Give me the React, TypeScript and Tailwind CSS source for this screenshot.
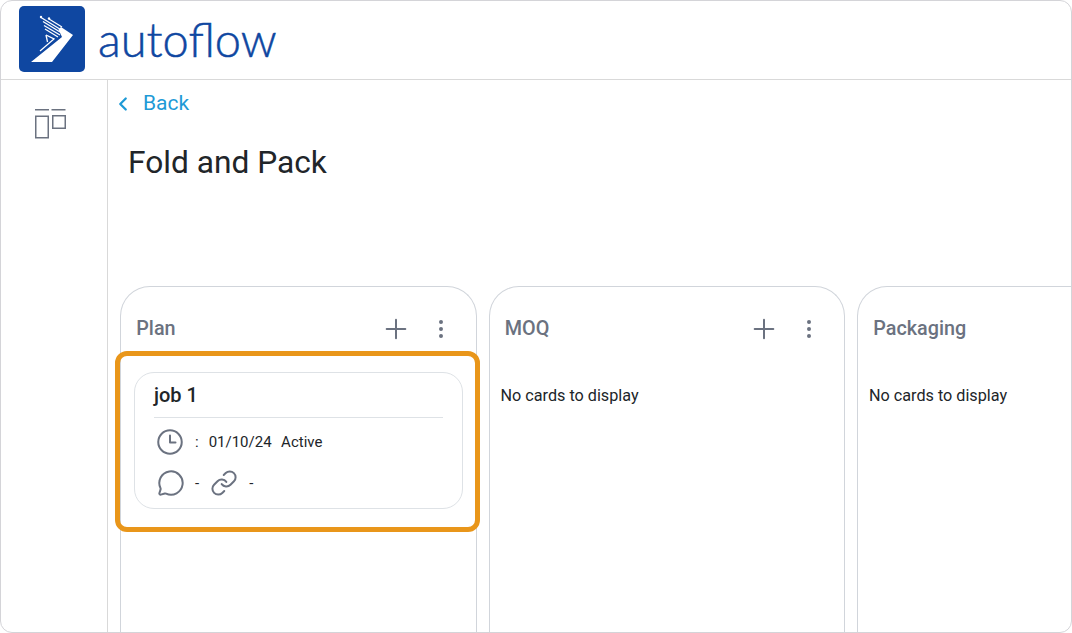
import { ChevronLeft, EllipsisVertical, Link, MessageCircle, Plus } from "lucide-react";

function Logo() {
    return (
        <svg width="66" height="66" viewBox="19 6 66 66" className="shrink-0">
            <rect x="19" y="6" width="66" height="66" rx="5" fill="#0f47a1" />
            <path d="M31 62 L52 62 L73 35 L61 27 L58.5 29.5 L62 37 Z" fill="#fff" />
            <g stroke="#fff" strokeWidth="1.3" fill="none">
                <path d="M41 17.5 L63 31" />
                <path d="M49 19 L62 27" />
                <path d="M43 21.5 L60 32" />
                <path d="M44 25.5 L60 35" />
                <path d="M45 29 L58 37" />
                <path d="M46 35 L54 39 L40 51" />
                <path d="M46 35 L47.5 42" />
            </g>
            <circle cx="41" cy="17" r="1.2" fill="#fff" />
            <circle cx="49" cy="18.5" r="1.2" fill="#fff" />
        </svg>
    );
}

function BoardIcon() {
    return (
        <svg width="31" height="31" viewBox="0 0 31 31" fill="none" stroke="#6b7280" strokeWidth="1.5">
            <path d="M0 1.75 H14 M16.5 1.75 H30.5" />
            <rect x="0.75" y="8.25" width="12.5" height="21.5" />
            <rect x="17.75" y="7.75" width="12.5" height="12.5" />
        </svg>
    );
}

function ClockIcon() {
    return (
        <svg width="26" height="26" viewBox="0 0 26 26" fill="none" stroke="#6b7280" strokeWidth="2" strokeLinecap="round" strokeLinejoin="round">
            <circle cx="13" cy="13" r="11.75" />
            <path d="M13 6.5 V13.5 H18.5" />
        </svg>
    );
}

function ColumnHead({ title }: { title: string }) {
    return (
        <div className="flex h-[83px] items-center justify-between pl-[15.25px] pr-[23px]">
            <h2 className="text-[19.8px] font-medium leading-[28px] text-[#6b7280]">{title}</h2>
            <div className="flex items-center gap-[17px] text-[#6b7280]">
                <Plus className="h-[32px] w-[32px]" strokeWidth={1.5} />
                <EllipsisVertical className="h-[24px] w-[24px]" strokeWidth={2} />
            </div>
        </div>
    );
}

function EmptyColumn({ title }: { title: string }) {
    return (
        <section className="h-[360px] w-[356.5px] shrink-0 rounded-t-[30px] border border-b-0 border-[#d1d5db]">
            <ColumnHead title={title} />
            <p className="mt-[15px] pl-[11px] text-[16.2px] leading-[22px] text-[#212529]">No cards to display</p>
        </section>
    );
}

export default function App() {
    return (
        <div className="h-[633px] w-[1072px] overflow-hidden bg-white font-['Roboto',sans-serif]">
            <div className="flex h-full flex-col overflow-hidden rounded-[12px] border border-[#d4d4d8]">
                <header className="flex h-[79px] shrink-0 items-center gap-[13px] border-b border-[#d9d9d9] pb-[2px] pl-[18px]">
                    <Logo />
                    <span className="font-['Lato',sans-serif] text-[47px] font-light leading-none text-[#0f47a1] [-webkit-text-stroke:0.5px_#0f47a1]">autoflow</span>
                </header>
                <div className="flex min-h-0 flex-1">
                    <aside className="w-[107px] shrink-0 border-r border-[#d9d9d9] pt-[28px] pl-[34px]">
                        <BoardIcon />
                    </aside>
                    <main className="min-w-0 flex-1 overflow-hidden">
                        <a className="flex h-[48px] items-center gap-[9px] pl-[4px] text-[21px] text-[#1e9ad6]">
                            <ChevronLeft className="h-[22px] w-[22px]" strokeWidth={2.5} />
                            <span>Back</span>
                        </a>
                        <h1 className="mt-[13px] pl-[20px] text-[31.7px] leading-[44px] text-[#212529]">Fold and Pack</h1>
                        <div className="mt-[101px] flex gap-[12px] pl-[12px]">
                            <section className="relative h-[360px] w-[356.5px] shrink-0 rounded-t-[30px] border border-b-0 border-[#d1d5db]">
                                <ColumnHead title="Plan" />
                                <article className="mx-[13px] mt-[2px] h-[137px] w-[329px] rounded-[20px] border border-[#dee2e6] px-[19px]">
                                    <h3 className="flex h-[44px] items-center text-[20px] font-medium text-[#212529]">job 1</h3>
                                    <div className="border-t border-[#dee2e6]" />
                                    <div className="mt-[11px] flex h-[26px] items-center text-[15px] text-[#212529]">
                                        <span className="ml-[3px]"><ClockIcon /></span>
                                        <span className="ml-[12px]">:</span>
                                        <span className="ml-[10px]">01/10/24</span>
                                        <span className="ml-[9.5px]">Active</span>
                                    </div>
                                    <div className="mt-[14px] flex h-[28px] items-center text-[15px] text-[#212529]">
                                        <MessageCircle className="ml-[3px] h-[28px] w-[28px] text-[#6b7280]" strokeWidth={1.7} />
                                        <span className="ml-[10px]">-</span>
                                        <Link className="ml-[11px] h-[28px] w-[28px] text-[#6b7280]" strokeWidth={1.7} />
                                        <span className="ml-[11px]">-</span>
                                    </div>
                                </article>
                                <div className="absolute -left-[6px] top-[64px] h-[181px] w-[365px] rounded-[12px] border-[5px] border-[#e9961a]" />
                            </section>
                            <EmptyColumn title="MOQ" />
                            <EmptyColumn title="Packaging" />
                        </div>
                    </main>
                </div>
            </div>
        </div>
    );
}
